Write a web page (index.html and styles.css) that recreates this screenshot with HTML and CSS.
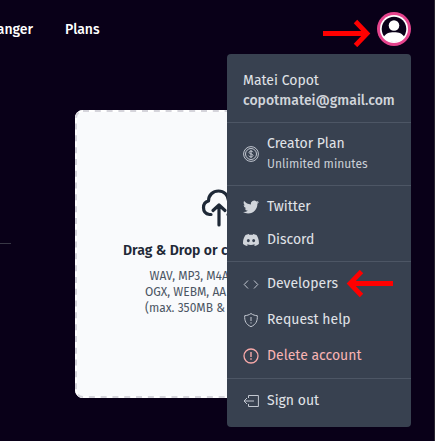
FILE: index.html
```html
<!DOCTYPE html>
<html lang="en">
<head>
<meta charset="utf-8">
<title>Upload</title>
<link rel="stylesheet" href="styles.css">
</head>
<body>
<header class="topbar">
  <nav class="nav"><a class="anger">anger</a><a class="plans">Plans</a></nav>
  <svg class="arrow arrow-right" viewBox="0 0 48 28"><path d="M0 14.500H44M32.500 2.500L44 14.500L32.500 26.500"/></svg>
  <svg class="avatar" viewBox="0 0 34 34"><circle cx="17" cy="17" r="17" fill="#e5438d"/><circle cx="17" cy="17" r="14" fill="#fff"/><circle cx="17" cy="17" r="12.300" fill="#090018"/><circle cx="17" cy="13.500" r="5.300" fill="#fff"/><path d="M6.500 25.500C8.500 21.500 12 20.300 17 20.300s8.500 1.200 10.500 5.200C24.500 29 21 30 17 30s-7.500-1-10.500-4.500Z" fill="#fff"/></svg>
</header>
<main class="content">
  <hr class="rule">
  <section class="dropzone">
    <svg class="outline" viewBox="0 0 288 288"><rect x="1" y="1" width="286" height="286" rx="7" class="base"/><rect x="1" y="1" width="286" height="286" rx="7"/></svg>
    <svg class="cloud" viewBox="0 0 36 40"><path d="M10 26.500H8.500C5 26 2.500 23.500 2.500 19.500c0-3.500 2.200-5.800 5-6.500C7.500 7 12 3 17.500 3S27 7 27.500 12.500c3.500.5 6 3.500 6 7s-3 7-6.500 7M18 37V17.500M12 22.500l6-5.500 6 5.500"/></svg>
    <h1 class="title">Drag &amp; Drop or c</h1>
    <p class="formats"><span class="f1">WAV, MP3, M4A</span><span class="f2">OGX, WEBM, AA</span><span class="f3">(max. 350MB &amp;</span></p>
  </section>
</main>
<aside class="menu">
  <div class="group account"><span class="name">Matei Copot</span><span class="email">copotmatei@gmail.com</span></div>
  <div class="group plan">
    <svg class="icon coin" viewBox="0 0 16 16"><circle cx="8" cy="8" r="7.400"/><circle cx="8" cy="8" r="5.500"/><path d="M10 6.200C9.700 5.400 9 5.100 8 5.100c-2.500 0-2.700 2.400 0 2.800 2.900.4 2.500 3-.1 3-1.200 0-1.900-.5-2.100-1.300M8 4v8"/></svg>
    <div class="lines"><span class="creator">Creator Plan</span><span class="minutes">Unlimited minutes</span></div>
  </div>
  <div class="group social">
    <a class="item"><svg class="icon solid" viewBox="0 0 24 24"><path d="M23.953 4.570a10 10 0 01-2.825.775 4.958 4.958 0 002.163-2.723c-.951.555-2.005.959-3.127 1.184a4.920 4.920 0 00-8.384 4.482C7.690 8.095 4.067 6.130 1.640 3.162a4.822 4.822 0 00-.666 2.475c0 1.710.870 3.213 2.188 4.096a4.904 4.904 0 01-2.228-.616v.060a4.923 4.923 0 003.946 4.827 4.996 4.996 0 01-2.212.085 4.936 4.936 0 004.604 3.417 9.867 9.867 0 01-6.102 2.105c-.390 0-.779-.023-1.170-.067a13.995 13.995 0 007.557 2.209c9.053 0 13.998-7.496 13.998-13.985 0-.210 0-.420-.015-.630A9.935 9.935 0 0024 4.590z"/></svg><span>Twitter</span></a>
    <a class="item"><svg class="icon solid" viewBox="0 0 24 24"><path d="M20.300 4.400A19.800 19.800 0 0 0 15.400 2.900l-.6 1.300a18.300 18.300 0 0 0-5.500 0l-.6-1.300a19.700 19.700 0 0 0-4.900 1.500C.5 9-.3 13.600.1 18.100a19.900 19.900 0 0 0 6 3l1.300-2-1.900-.9.400-.3a14.200 14.200 0 0 0 12.100 0l.4.300-1.900.9 1.300 2a19.800 19.800 0 0 0 6-3c.5-5.200-.8-9.700-3.500-13.700ZM8 15.300c-1.200 0-2.200-1.100-2.200-2.400S6.800 10.500 8 10.500s2.200 1.100 2.200 2.400-1 2.400-2.200 2.400Zm8 0c-1.200 0-2.200-1.100-2.200-2.400s1-2.400 2.200-2.400 2.200 1.100 2.200 2.400-1 2.400-2.200 2.400Z"/></svg><span>Discord</span></a>
  </div>
  <div class="group tools">
    <a class="item"><svg class="icon" viewBox="0 0 16 16"><path d="M5 4.500L1.200 8.500L5 12.500M11 4.500L14.800 8.500L11 12.500"/></svg><span class="developers">Developers</span><svg class="arrow arrow-left" viewBox="0 0 48 28"><path d="M47 13.500H4M15.500 1.500L4 13.500L15.500 25.500"/></svg></a>
    <a class="item"><svg class="icon" viewBox="0 0 16 16"><path d="M8 1.500C6 3 4 3.500 1.700 3.700C1.400 9 3 12.500 8 14.700C13 12.500 14.600 9 14.300 3.700C12 3.500 10 3 8 1.500ZM8 5v4M8 10.300v1.200"/></svg><span>Request help</span></a>
    <a class="item danger"><svg class="icon" viewBox="0 0 16 16"><circle cx="8" cy="8" r="7"/><path d="M8 4v5M8 10.200v1.600" stroke-width="1.400"/></svg><span>Delete account</span></a>
  </div>
  <div class="group exit"><a class="item"><svg class="icon" viewBox="0 0 16 16"><path d="M5.500 5V2.500H15.400V13.500H5.500V11M11 8H1M4 5L1 8L4 11"/></svg><span>Sign out</span></a></div>
</aside>
</body>
</html>
```
FILE: styles.css
```css
* { box-sizing: border-box; }
body {
  margin: 0;
  width: 435px;
  height: 441px;
  position: relative;
  overflow: hidden;
  background: #090018;
  border-right: 1px solid #29232f;
  color: #e0e3e8;
  font: 14px/20px "Fira Sans", "Noto Sans", sans-serif;
}
span, a { white-space: nowrap; }
.topbar { display: flex; height: 60px; }
.nav { display: flex; width: 323px; padding-top: 20px; color: #fff; font-weight: 500; }
.anger { display: flex; justify-content: flex-end; width: 33px; }
.plans { margin-left: 32px; }
.arrow { flex: none; width: 48px; height: 28px; fill: none; stroke: #f00; stroke-width: 4.800; }
.arrow-right { margin-top: 19px; }
.avatar { width: 34px; height: 34px; margin: 12px 0 0 6px; }
.content { display: flex; }
.rule { flex: none; width: 11px; height: 1px; margin: 183px 64px 0 0; border: 0; background: #383745; }
.dropzone { position: relative; flex: none; width: 288px; height: 288px; margin-top: 50px; padding-top: 78px; border-radius: 8px; background: #f9fafc; color: #1f2937; }
.outline { position: absolute; inset: 0; fill: none; stroke: #d5d4db; stroke-width: 2; stroke-dasharray: 6 5.800; }
.base { stroke: #fff; stroke-dasharray: none; }
.cloud { position: relative; display: block; width: 36px; height: 40px; margin-left: 126px; fill: none; stroke: #1f2937; stroke-width: 3.200; stroke-linecap: round; stroke-linejoin: round; }
.title { margin: 13px 0 0 48px; font-size: 14px; line-height: 20px; font-weight: 600; white-space: nowrap; }
.formats { display: flex; flex-direction: column; margin: 7px 0 0 70px; font-size: 12px; line-height: 16px; color: #4b5563; }
.f1 { margin-left: 4.500px; }
.menu { position: absolute; left: 227px; top: 54px; width: 184px; height: 373px; border-radius: 4px; background: #384150; }
.group { display: flex; flex-direction: column; padding: 0 16px; }
.group + .group { border-top: 1px solid #4d5665; }
.account { height: 68px; padding-top: 17px; }
.email { font-weight: 500; color: #d1d5db; }
.plan { flex-direction: row; align-items: center; height: 63px; gap: 8px; }
.lines { display: flex; flex-direction: column; line-height: 21px; }
.minutes { font-size: 12px; color: #cbd0d7; }
.social { height: 76px; padding-top: 4px; }
.item { display: flex; align-items: center; gap: 8px; height: 33px; }
.tools { height: 117px; padding-top: 4px; }
.tools .item { height: 36px; }
.exit { height: 49px; padding-top: 5px; }
.icon { flex: none; width: 16px; height: 16px; fill: none; stroke: #c2c7d0; stroke-width: 1; }
.icon.coin { margin-top: -1px; }
.icon.solid { fill: #d1d5db; stroke: none; }
.exit .icon { margin-top: 1px; }
.danger { color: #f8b4b4; }
.danger .icon { stroke: #f8a9a9; stroke-width: 1.300; }
.developers { width: 71px; }
```
